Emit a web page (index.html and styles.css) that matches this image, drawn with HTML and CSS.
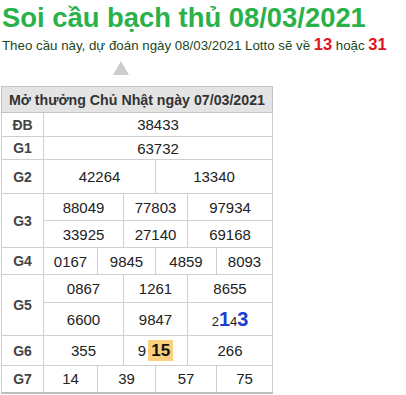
FILE: index.html
```html
<!DOCTYPE html>
<html lang="vi">
<head>
<meta charset="utf-8">
<title>Soi cầu bạch thủ 08/03/2021</title>
<link rel="stylesheet" href="styles.css">
</head>
<body>
<h1 class="title">Soi cầu bạch thủ 08/03/2021</h1>
<p class="predict">Theo cầu này, dự đoán ngày 08/03/2021 Lotto sẽ về <b class="hot">13</b> hoặc <b class="hot">31</b></p>
<div class="arrow"></div>
<table class="kq">
  <colgroup>
    <col class="c-label"><col class="c1"><col class="c2"><col class="c3"><col class="c4"><col class="c5"><col class="c6">
  </colgroup>
  <tr class="r-head"><th colspan="7" class="head">Mở thưởng Chủ Nhật ngày 07/03/2021</th></tr>
  <tr class="r-db"><td class="lbl">ĐB</td><td colspan="6">38433</td></tr>
  <tr class="r-g1"><td class="lbl">G1</td><td colspan="6">63732</td></tr>
  <tr class="r-g2"><td class="lbl">G2</td><td colspan="3">42264</td><td colspan="3">13340</td></tr>
  <tr class="r-g3a"><td class="lbl" rowspan="2">G3</td><td colspan="2">88049</td><td colspan="2">77803</td><td colspan="2">97934</td></tr>
  <tr class="r-g3b"><td colspan="2">33925</td><td colspan="2">27140</td><td colspan="2">69168</td></tr>
  <tr class="r-g4"><td class="lbl">G4</td><td>0167</td><td colspan="2">9845</td><td colspan="2">4859</td><td>8093</td></tr>
  <tr class="r-g5a"><td class="lbl" rowspan="2">G5</td><td colspan="2">0867</td><td colspan="2">1261</td><td colspan="2">8655</td></tr>
  <tr class="r-g5b"><td colspan="2">6600</td><td colspan="2">9847</td><td colspan="2"><span class="sm">2</span><b class="blue">1</b><span class="sm">4</span><b class="blue">3</b></td></tr>
  <tr class="r-g6"><td class="lbl">G6</td><td colspan="2">355</td><td colspan="2">9<b class="mark">15</b></td><td colspan="2">266</td></tr>
  <tr class="r-g7"><td class="lbl">G7</td><td>14</td><td colspan="2">39</td><td colspan="2">57</td><td>75</td></tr>
</table>
</body>
</html>
```

FILE: styles.css
```css
html, body {
  margin: 0;
  padding: 0;
  background: #ffffff;
}
body {
  font-family: "Liberation Sans", Arial, sans-serif;
  color: #222222;
}
.title {
  margin: 0;
  padding: 2px 0 0 2px;
  font-size: 27.4px;
  line-height: 32px;
  font-weight: bold;
  color: #2bb14a;
}
.predict {
  margin: 2px 0 0 0;
  padding-left: 2px;
  font-size: 13.3px;
  line-height: 20px;
  color: #1c461c;
}
.hot {
  font-size: 16.5px;
  line-height: 1;
  color: #e0141c;
}
.arrow {
  width: 0;
  height: 0;
  margin: 5px 0 0 113px;
  border-left: 8px solid transparent;
  border-right: 8px solid transparent;
  border-bottom: 14px solid #cccccc;
}
.kq {
  margin: 11px 0 0 1px;
  width: 271px;
  table-layout: fixed;
  border-collapse: collapse;
  border: 1px solid #c4c4c4;
  border-bottom: 2px solid #bdbdbd;
}
.c-label { width: 42px; }
.c1 { width: 54px; }
.c2 { width: 26px; }
.c3 { width: 32px; }
.c4 { width: 32px; }
.c5 { width: 29px; }
.c6 { width: 56px; }
.kq td, .kq th {
  border: 1px solid #cfcfcf;
  padding: 0;
  text-align: center;
  vertical-align: middle;
  font-size: 15px;
  color: #222222;
  white-space: nowrap;
}
.kq th.head {
  background: #e4e4e4;
  border-color: #c4c4c4;
  text-align: left;
  padding-left: 7px;
  font-size: 14.2px;
  font-weight: bold;
  color: #333333;
}
.kq td.lbl {
  font-size: 14px;
  font-weight: bold;
  color: #444444;
}
.r-head { height: 26px; }
.r-db { height: 24px; }
.r-g1 { height: 23px; }
.r-g2 { height: 34px; }
.r-g3a { height: 27px; }
.r-g3b { height: 27px; }
.r-g4 { height: 27px; }
.r-g5a { height: 28px; }
.r-g5b { height: 33px; }
.r-g6 { height: 30px; }
.r-g7 { height: 27px; }
.sm {
  font-size: 13px;
}
.blue {
  font-size: 20px;
  color: #1a3fd0;
}
.mark {
  display: inline-block;
  margin-left: 2px;
  padding: 1px 3px;
  font-size: 17px;
  line-height: 19px;
  background: #fbd07c;
  color: #111111;
}
```
